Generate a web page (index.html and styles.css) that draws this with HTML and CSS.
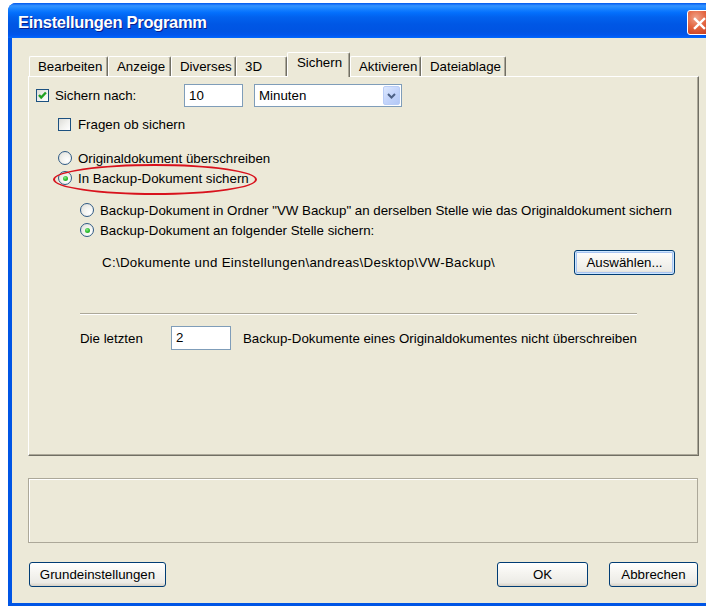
FILE: index.html
```html
<!DOCTYPE html>
<html lang="de">
<head>
<meta charset="utf-8">
<title>Einstellungen Programm</title>
<link rel="stylesheet" href="styles.css">
</head>
<body>
<div class="window">
  <div class="titlebar">
    <span class="title">Einstellungen Programm</span>
    <span class="close-btn">
      <svg width="25" height="25" viewBox="0 0 25 25"><path d="M7.5 7.5 L17.5 17.5 M17.5 7.5 L7.5 17.5" stroke="#fff" stroke-width="2.6" stroke-linecap="square"/></svg>
    </span>
  </div>

  <div class="client">
    <div class="tabs">
      <div class="tab">Bearbeiten</div>
      <div class="tab">Anzeige</div>
      <div class="tab">Diverses</div>
      <div class="tab">3D</div>
      <div class="tab active">Sichern</div>
      <div class="tab">Aktivieren</div>
      <div class="tab">Dateiablage</div>
    </div>

    <div class="panel">
      <div class="row row-interval">
        <div class="check-field">
          <span class="checkbox"><svg width="11" height="11" viewBox="0 0 11 11"><path d="M2 5 L4.2 7.5 L8.9 2.5" stroke="#21a121" stroke-width="2.4" fill="none"/></svg></span>
          <span>Sichern nach:</span>
        </div>
        <div class="textbox tb-interval">10</div>
        <div class="combo">
          <span class="combo-value">Minuten</span>
          <span class="combo-btn"><svg width="9" height="6" viewBox="0 0 9 6"><path d="M1 1 L4.5 4.5 L8 1" stroke="#4d6185" stroke-width="2" fill="none"/></svg></span>
        </div>
      </div>

      <div class="row row-ask">
        <span class="checkbox"></span>
        <span>Fragen ob sichern</span>
      </div>

      <div class="row row-radio row-mode">
        <span class="radio"></span>
        <span>Originaldokument überschreiben</span>
      </div>
      <div class="row row-radio">
        <span class="radio checked"></span>
        <span>In Backup-Dokument sichern</span>
      </div>

      <div class="row row-radio row-sub row-sub-first">
        <span class="radio"></span>
        <span>Backup-Dokument in Ordner "VW Backup" an derselben Stelle wie das Originaldokument sichern</span>
      </div>
      <div class="row row-radio row-sub">
        <span class="radio checked"></span>
        <span>Backup-Dokument an folgender Stelle sichern:</span>
      </div>

      <div class="row row-path">
        <span class="path">C:\Dokumente und Einstellungen\andreas\Desktop\VW-Backup\</span>
        <button class="btn btn-default btn-browse">Auswählen...</button>
      </div>

      <div class="separator"></div>

      <div class="row row-keep">
        <span class="keep-label">Die letzten</span>
        <div class="textbox tb-keep">2</div>
        <span>Backup-Dokumente eines Originaldokumentes nicht überschreiben</span>
      </div>

      <span class="highlight-ring"></span>
    </div>

    <div class="statusbox"></div>

    <div class="actions">
      <button class="btn btn-reset">Grundeinstellungen</button>
      <button class="btn btn-ok">OK</button>
      <button class="btn btn-cancel">Abbrechen</button>
    </div>
  </div>
</div>
</body>
</html>
```

FILE: styles.css
```css
html, body {
  margin: 0;
  padding: 0;
  background: #fff;
  overflow: hidden;
}

body {
  font-family: "Liberation Sans", Arial, sans-serif;
  font-size: 13.3px;
  color: #000;
}

/* ---------- window frame ---------- */
.window {
  margin: 3px 0 0 8px;
  width: 710px;
  height: 603px;
  background: #0055e5;
  border-radius: 8px 8px 0 0;
  display: flex;
  flex-direction: column;
}

.titlebar {
  height: 35px;
  flex: none;
  display: flex;
  align-items: center;
  padding: 0 6px 0 10px;
  border-radius: 8px 8px 0 0;
  background: linear-gradient(to bottom,
    #0058ee 0%, #3593ff 8%, #288eff 12%, #127dff 20%,
    #036ffc 28%, #0262ee 40%, #0057e5 60%, #0054e3 80%,
    #0055eb 90%, #005bf5 95%, #026afe 100%);
}

.title {
  flex: 1;
  padding-top: 4px;
  color: #fff;
  font-weight: bold;
  font-size: 16.5px;
  letter-spacing: -0.3px;
  text-shadow: 1px 1px 0 #0a1e8c;
}

.close-btn {
  width: 23px;
  height: 23px;
  margin-top: 4px;
  border: 1px solid #fff;
  border-radius: 3px;
  background: radial-gradient(circle at 35% 30%, #f0a38a 0%, #e3643f 45%, #cc4424 80%, #b8371a 100%);
  display: flex;
}

/* ---------- client area ---------- */
.client {
  flex: 1;
  margin: 0 4px 3px 4px;
  background: #ece9d8;
  padding: 14px 0 0 16px;
}

.tabs {
  display: grid;
  grid-template-columns: 79px 63px 65px 51px 63px 71px 85px;
  align-items: end;
  height: 24px;
  padding-left: 1px;
}

.tab {
  height: 20px;
  box-sizing: border-box;
  padding-left: 8px;
  line-height: 19px;
  border-top: 1px solid #fff;
  border-left: 1px solid #fff;
  border-right: 1px solid #716f64;
  box-shadow: inset -1px 0 0 #aca899;
  border-radius: 2px 2px 0 0;
  white-space: nowrap;
}

.tab.active {
  height: 25px;
  margin-bottom: -1px;
  line-height: 20px;
  padding-left: 9px;
  background: #ece9d8;
  position: relative;
  z-index: 1;
}

.panel {
  position: relative;
  width: 671px;
  height: 380px;
  box-sizing: border-box;
  border-top: 1px solid #fff;
  border-left: 1px solid #fff;
  border-right: 1px solid #716f64;
  border-bottom: 1px solid #716f64;
  box-shadow: inset -1px -1px 0 #aca899;
  padding: 7px 0 0 7px;
}

/* ---------- rows ---------- */
.row {
  display: flex;
  align-items: center;
  white-space: nowrap;
}

.row-interval {
  height: 23px;
}

.check-field {
  width: 148px;
  display: flex;
  align-items: center;
  gap: 6px;
}

.row-ask {
  height: 17px;
  margin: 9px 0 0 22px;
  gap: 7px;
}

.row-radio {
  height: 20px;
  gap: 6px;
  margin-left: 22px;
}

.row-mode {
  margin-top: 15px;
}

.row-sub {
  margin-left: 44px;
}

.row-sub-first {
  margin-top: 12px;
}

.row-path {
  height: 25px;
  margin: 10px 23px 0 66px;
}

.path {
  flex: 1;
  letter-spacing: 0.3px;
}

.separator {
  width: 557px;
  height: 1px;
  margin: 38px 0 0 44px;
  background: #aca899;
  border-bottom: 1px solid #fff;
}

.row-keep {
  height: 24px;
  margin: 11px 0 0 44px;
}

.keep-label {
  width: 91px;
}

/* ---------- controls ---------- */
.checkbox {
  width: 11px;
  height: 11px;
  flex: none;
  border: 1px solid #1c5180;
  background: linear-gradient(135deg, #dcdcd7 0%, #f2f2ef 55%, #fff 100%);
  display: flex;
}

.radio {
  width: 12px;
  height: 12px;
  flex: none;
  border: 1px solid #2f5a85;
  border-radius: 50%;
  background: radial-gradient(circle at 70% 70%, #fff 0%, #f4f4f1 40%, #dcdcd5 100%);
  display: flex;
  align-items: center;
  justify-content: center;
}

.radio.checked::after {
  content: "";
  width: 5px;
  height: 5px;
  border-radius: 50%;
  background: radial-gradient(circle at 40% 35%, #8de88d 0%, #2fbf2f 50%, #1a961a 100%);
}

.textbox {
  height: 23px;
  box-sizing: border-box;
  border: 1px solid #7f9db9;
  background: #fff;
  padding: 0 4px;
  line-height: 21px;
}

.tb-interval {
  width: 59px;
}

.tb-keep {
  width: 60px;
  height: 24px;
  line-height: 22px;
  margin-right: 12px;
}

.combo {
  width: 148px;
  height: 23px;
  box-sizing: border-box;
  margin-left: 11px;
  border: 1px solid #7f9db9;
  background: #fff;
  display: flex;
  align-items: center;
  padding: 0 1px 0 4px;
}

.combo-value {
  flex: 1;
}

.combo-btn {
  width: 15px;
  height: 17px;
  border: 1px solid #b9cdf7;
  border-radius: 2px;
  background: linear-gradient(135deg, #dde8fe 0%, #c4d5fb 50%, #b3c8f5 100%);
  display: flex;
  align-items: center;
  justify-content: center;
}

.btn {
  font: inherit;
  color: #000;
  box-sizing: border-box;
  height: 25px;
  padding: 0;
  border: 1px solid #003c74;
  border-radius: 3px;
  background: linear-gradient(to bottom, #fff 0%, #f6f5f1 40%, #ecebe6 85%, #d6d0c5 100%);
}

.btn-default {
  box-shadow: inset 0 0 0 1px #cee7ff, inset 0 0 0 2px #a9c4f1;
}

.btn-browse {
  width: 101px;
}

/* ---------- lower area ---------- */
.statusbox {
  width: 670px;
  height: 65px;
  box-sizing: border-box;
  margin-top: 22px;
  border: 1px solid #aca899;
  box-shadow: inset 1px 1px 0 #fff;
}

.actions {
  display: flex;
  margin: 19px 0 0 1px;
}

.btn-reset {
  width: 137px;
}

.btn-ok {
  width: 91px;
  margin-left: auto;
}

.btn-cancel {
  width: 89px;
  margin: 0 16px 0 21px;
}

/* red marker ring drawn over the second save option */
.highlight-ring {
  position: absolute;
  left: 24px;
  top: 87px;
  width: 200px;
  height: 27px;
  border: 2px solid #d8121d;
  border-radius: 50%;
  pointer-events: none;
}
```
